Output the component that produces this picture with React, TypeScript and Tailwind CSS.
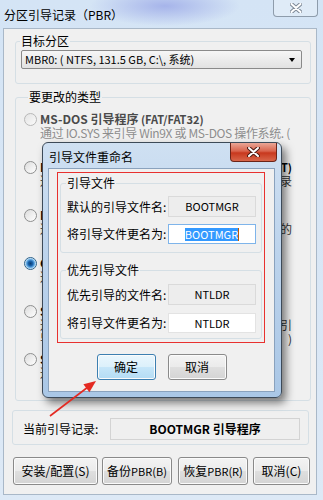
import React from "react";

type Row = {
  title: string;
  tag?: string;
  desc: string[];
  fill?: boolean[];
  disabled?: boolean;
  checked?: boolean;
};

const rows: Row[] = [
  {
    title: "MS-DOS 引导程序",
    tag: " (FAT/FAT32)",
    desc: ["通过 IO.SYS 来引导 Win9X 或 MS-DOS 操作系统. ("],
    fill: [false, false],
    disabled: true,
  },
  {
    title: "NTLDR 引导程序",
    tag: " (FAT/FAT32/NTFS/exFAT)",
    desc: ["通过 NTLDR 来引导 Windows 2000/XP 的记录"],
    fill: [true, true],
  },
  {
    title: "BOOTMGR 引导程序",
    tag: " (FAT/NTFS)",
    desc: ["通过 BOOTMGR 来引导 Vista/7/8 系统的"],
    fill: [false, true],
  },
  {
    title: "GRUB4DOS 0.4.6a",
    tag: " (FAT/NTFS)",
    desc: ["通过 GRLDR 来引导 GRUB4DOS"],
    checked: true,
  },
  {
    title: "SYSLINUX 4.07",
    tag: " (FAT/NTFS)",
    desc: ["通过 LDLINUX.SYS 来引导 SYSLINUX 可引", "导的程序等 )"],
    fill: [false, true, true],
  },
  {
    title: "SYSLINUX 6.03",
    tag: " (FAT/NTFS/EXT)",
    desc: ["通过 LDLINUX.SYS 来引导"],
  },
];

function Radio({ checked, disabled }: { checked?: boolean; disabled?: boolean }) {
  if (checked) {
    return (
      <span className="mt-[1px] block h-[13px] w-[13px] shrink-0 rounded-full border border-[#2c628b] bg-[radial-gradient(circle,#0d3d70_0%,#1a64ad_30%,#6fb4ea_55%,#eef4f8_72%)]" />
    );
  }
  return (
    <span
      className={
        disabled
          ? "mt-[1px] block h-[13px] w-[13px] shrink-0 rounded-full border border-[#b8b8b8] bg-[linear-gradient(135deg,#e4e4e4,#fafafa)]"
          : "mt-[1px] block h-[13px] w-[13px] shrink-0 rounded-full border border-[#8e8f8f] bg-[linear-gradient(135deg,#dcdcdc,#ffffff)]"
      }
    />
  );
}

function Field({ kind, children }: { kind: "ro" | "edit" | "focus"; children: React.ReactNode }) {
  const cls =
    kind === "ro"
      ? "border-[#dadada] bg-[#ededed]"
      : kind === "focus"
        ? "border-[#7eb4ea] bg-white"
        : "border-[#e3e3e3] bg-white";
  return (
    <div className={`flex h-full w-[88px] items-center justify-center border text-[11px] leading-none ${cls}`}>
      {children}
    </div>
  );
}

function WinButton({
  children,
  primary,
  className = "",
}: {
  children: React.ReactNode;
  primary?: boolean;
  className?: string;
}) {
  return (
    <div
      className={`flex items-center justify-center rounded-[3px] border text-[12px] leading-none text-black shadow-[inset_0_0_0_1px_#fbfbfb] ${
        primary
          ? "border-[#3c7fb1] bg-[linear-gradient(180deg,#eaf6fd_0%,#dcf0fb_50%,#c6e6f9_51%,#b4dcf4_100%)]"
          : "border-[#8a8a8a] bg-[linear-gradient(180deg,#f3f3f3_0%,#ebebeb_50%,#dfdfdf_51%,#d4d4d4_100%)]"
      } ${className}`}
    >
      {children}
    </div>
  );
}

function CloseX({ w, h, outline }: { w: number; h: number; outline: string }) {
  return (
    <svg width={w} height={h} viewBox="0 0 12 10">
      <path d="M1.5 1 L10.5 9 M10.5 1 L1.5 9" stroke={outline} strokeWidth="4" strokeLinecap="round" />
      <path d="M1.5 1 L10.5 9 M10.5 1 L1.5 9" stroke="#ffffff" strokeWidth="2" strokeLinecap="round" />
    </svg>
  );
}

export default function App() {
  return (
    <div className="relative h-[500px] w-[323px] overflow-hidden bg-[radial-gradient(ellipse_75px_20px_at_165px_6px,#a6b4ea_0%,rgba(166,180,234,0)_100%),linear-gradient(180deg,#d4e4f5_0%,#dde9f6_100%)] font-['Noto_Sans_CJK_SC','Liberation_Sans',sans-serif] text-[12px] text-black">
      {/* window title bar */}
      <div className="flex h-[28px]">
        <div className="pl-[4px] pt-[7px] text-[12px] leading-[16px]">分区引导记录（PBR）</div>
        <div className="ml-auto mr-[5px] flex h-[17px] w-[45px] items-center justify-center rounded-b-[4px] border border-t-0 border-[#8e9cab] bg-[rgba(255,255,255,0.25)]">
          <CloseX w={12} h={10} outline="#7d8896" />
        </div>
      </div>

      {/* client area */}
      <div className="ml-[3px] h-[467px] w-[314px] border border-[#a9b8c8] bg-[#f0f0f0]">
        <fieldset className="ml-[11px] mt-[4px] w-[296px] rounded-[3px] border border-[#d5dfe5] pb-[14px]">
          <legend className="ml-[4px] px-[1px] text-[12px] leading-[16px]">目标分区</legend>
          <div className="ml-[5px] mt-[1px] flex h-[19px] w-[281px] items-center rounded-[2px] border border-[#8a8a8a] bg-[linear-gradient(180deg,#f6f6f6_0%,#ececec_50%,#e2e2e2_100%)] pl-[3px] pr-[6px] text-[11px] leading-none">
            <span>MBR0: ( NTFS, 131.5 GB, C:\, 系统)</span>
            <span className="ml-auto block h-0 w-0 border-x-[3.5px] border-t-[4px] border-x-transparent border-t-black" />
          </div>
        </fieldset>

        <fieldset className="ml-[11px] mt-[5px] w-[296px] overflow-hidden rounded-[3px] border border-[#d5dfe5] pl-[8px] pt-[7px]">
          <legend className="ml-[4px] px-[1px] text-[12px] leading-[16px]">要更改的类型</legend>
          {rows.map((r, i) => (
            <div key={i} className="flex h-[48px] items-start gap-[3px]">
              <Radio checked={r.checked} disabled={r.disabled} />
              <div className="w-[252px] overflow-hidden whitespace-nowrap leading-[14px]">
                <div
                  className={`text-[12px] font-bold ${r.disabled ? "text-[#4a4a4a]" : "text-black"} ${
                    r.fill && r.fill[0] ? "[text-align-last:justify]" : ""
                  }`}
                >
                  {r.title}
                  <span className="text-[11px]">{r.tag}</span>
                </div>
                {r.desc.map((d, j) => (
                  <div
                    key={j}
                    className={`text-[12px] ${
                      r.disabled ? "tracking-[-0.35px] text-[#8d8d8d]" : "text-[#333333]"
                    } ${r.fill && r.fill[j + 1] ? "[text-align-last:justify]" : ""}`}
                  >
                    {d}
                  </div>
                ))}
              </div>
            </div>
          ))}
        </fieldset>

        <fieldset className="ml-[8px] mt-[9px] flex w-[297px] items-center rounded-[3px] border border-[#d5dfe5] pb-[4px] pl-[10px] pr-[8px] pt-[7px]">
          <div className="w-[87px] text-[12px] leading-none">当前引导记录:</div>
          <div className="flex h-[22px] flex-1 items-center justify-center border border-[#d3d3d3] bg-[#efefef] text-[12px] font-bold leading-none">
            BOOTMGR 引导程序
          </div>
        </fieldset>

        <div className="ml-[9px] mt-[12px] flex h-[28px]">
          <WinButton className="w-[85px]">安装/配置(S)</WinButton>
          <WinButton className="ml-[4px] w-[70px]">
            备份<span className="text-[11px]">PBR(B)</span>
          </WinButton>
          <WinButton className="ml-[6px] w-[70px]">
            恢复<span className="text-[11px]">PBR(R)</span>
          </WinButton>
          <WinButton className="ml-[5px] w-[57px]">取消(C)</WinButton>
        </div>
      </div>

      {/* modal dialog */}
      <div className="absolute left-[42px] top-[142px] h-[256px] w-[240px] rounded-[6px] border border-[#3d4a58] bg-[linear-gradient(180deg,#cfe0f2_0%,#bcd3ec_45%,#aac7e6_100%)] shadow-[4px_5px_9px_rgba(0,0,0,0.5)]">
        <div className="flex h-[25px]">
          <div className="pl-[6px] pt-[6px] text-[12px] leading-[16px]">引导文件重命名</div>
          <div className="ml-auto mr-[4px] flex h-[19px] w-[47px] items-center justify-center rounded-b-[4px] border border-t-0 border-[#6b2418] bg-[linear-gradient(180deg,#eaa696_0%,#d9644d_45%,#c8381e_55%,#d8664a_100%)]">
            <CloseX w={13} h={10} outline="#4a1a12" />
          </div>
        </div>

        <div className="ml-[5px] mr-[6px] h-[224px] border border-[#8aa2bd] bg-[#f0f0f0]">
          <div className="ml-[8px] mt-[3px] h-[171px] w-[208px] border border-[#e8312f]">
            <fieldset className="mx-[2px] mt-[2px] rounded-[3px] border border-[#d5dfe5] pb-[8px]">
              <legend className="ml-[5px] px-[1px] text-[12px] leading-[16px]">引导文件</legend>
              <div className="mt-[5px] flex h-[21px] items-center">
                <div className="w-[107px] pl-[6px] text-[12px] leading-none">默认的引导文件名:</div>
                <Field kind="ro">BOOTMGR</Field>
              </div>
              <div className="mt-[7px] flex h-[20px] items-center">
                <div className="w-[107px] pl-[6px] text-[12px] leading-none">将引导文件更名为:</div>
                <Field kind="focus">
                  <span className="bg-[#3399ff] py-[1px] text-white">BOOTMGR</span>
                  <span className="block h-[13px] w-[1px] bg-[#c05a00]" />
                </Field>
              </div>
            </fieldset>

            <fieldset className="mx-[2px] mt-[9px] rounded-[3px] border border-[#d5dfe5] pb-[5px]">
              <legend className="ml-[5px] px-[1px] text-[12px] leading-[16px]">优先引导文件</legend>
              <div className="mt-[6px] flex h-[21px] items-center">
                <div className="w-[107px] pl-[6px] text-[12px] leading-none">优先引导的文件名:</div>
                <Field kind="ro">NTLDR</Field>
              </div>
              <div className="mt-[8px] flex h-[20px] items-center">
                <div className="w-[107px] pl-[6px] text-[12px] leading-none">将引导文件更名为:</div>
                <Field kind="edit">NTLDR</Field>
              </div>
            </fieldset>
          </div>

          <div className="mt-[11px] flex h-[26px] justify-center gap-[12px]">
            <WinButton primary className="w-[59px]">确定</WinButton>
            <WinButton className="w-[59px]">取消</WinButton>
          </div>
        </div>
      </div>

      {/* red annotation arrow */}
      <svg className="pointer-events-none absolute left-0 top-0" width="323" height="500">
        <line x1="50" y1="416" x2="88" y2="387" stroke="#e42a22" strokeWidth="1.6" />
        <polygon points="96,381 89.4,392.3 83.4,384.3" fill="#e42a22" />
      </svg>
    </div>
  );
}
